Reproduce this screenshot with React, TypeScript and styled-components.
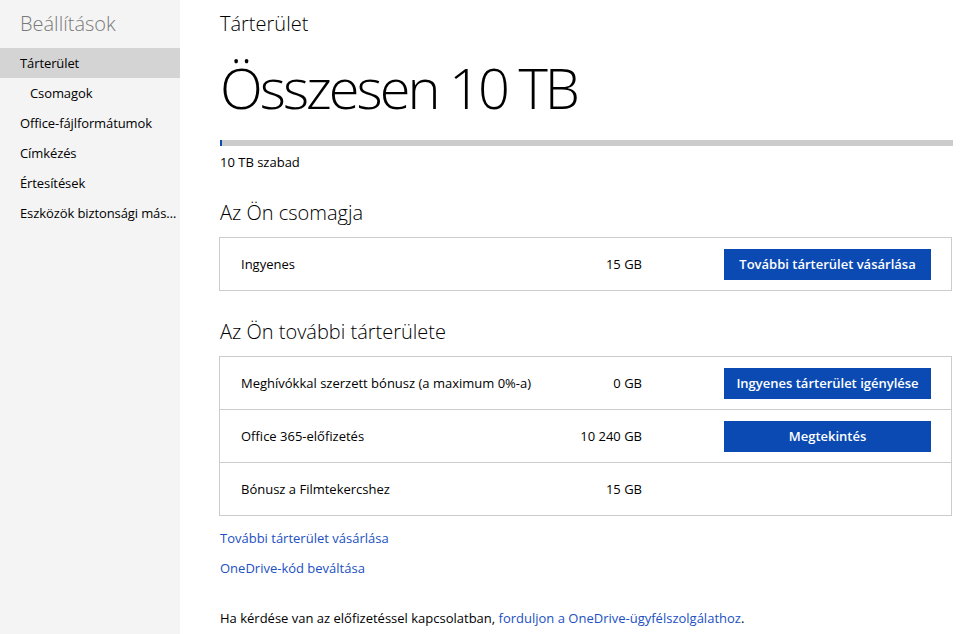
import React from 'react';
import styled, { createGlobalStyle } from 'styled-components';

const GlobalStyle = createGlobalStyle`
  html, body {
    margin: 0;
    padding: 0;
    background: #ffffff;
  }
  body {
    font-family: 'Open Sans', 'Noto Sans', sans-serif;
    font-size: 13px;
    color: #000000;
  }
`;

const navItems = [
  { label: 'Tárterület', active: true, sub: false },
  { label: 'Csomagok', active: false, sub: true },
  { label: 'Office-fájlformátumok', active: false, sub: false },
  { label: 'Címkézés', active: false, sub: false },
  { label: 'Értesítések', active: false, sub: false },
  { label: 'Eszközök biztonsági másolata', active: false, sub: false },
];

const planRows = [
  { label: 'Ingyenes', value: '15 GB', action: 'További tárterület vásárlása' },
];

const extraRows = [
  {
    label: 'Meghívókkal szerzett bónusz (a maximum 0%-a)',
    value: '0 GB',
    action: 'Ingyenes tárterület igénylése',
  },
  { label: 'Office 365-előfizetés', value: '10 240 GB', action: 'Megtekintés' },
  { label: 'Bónusz a Filmtekercshez', value: '15 GB', action: '' },
];

function StorageTable({ rows }: { rows: typeof extraRows }) {
  return (
    <Table>
      {rows.map((row) => (
        <Row key={row.label}>
          <RowLabel>{row.label}</RowLabel>
          <RowValue>{row.value}</RowValue>
          {row.action ? <ActionButton>{row.action}</ActionButton> : <span />}
        </Row>
      ))}
    </Table>
  );
}

function App() {
  return (
    <>
      <GlobalStyle />
      <Page>
        <Sidebar>
          <SidebarTitle>Beállítások</SidebarTitle>
          <Nav>
            {navItems.map((item) => (
              <NavItem key={item.label} $active={item.active} $sub={item.sub}>
                {item.label}
              </NavItem>
            ))}
          </Nav>
        </Sidebar>
        <Main>
          <PageTitle>Tárterület</PageTitle>
          <Total>Összesen 10 TB</Total>
          <UsageBar>
            <UsageFill style={{ width: '0.15%' }} />
          </UsageBar>
          <FreeText>10 TB szabad</FreeText>

          <SectionTitle>Az Ön csomagja</SectionTitle>
          <StorageTable rows={planRows} />

          <SectionTitle>Az Ön további tárterülete</SectionTitle>
          <StorageTable rows={extraRows} />

          <Links>
            <Link href="#">További tárterület vásárlása</Link>
            <Link href="#">OneDrive-kód beváltása</Link>
          </Links>
          <Footer>
            Ha kérdése van az előfizetéssel kapcsolatban,{' '}
            <Link href="#">forduljon a OneDrive-ügyfélszolgálathoz</Link>.
          </Footer>
        </Main>
      </Page>
    </>
  );
}

const Page = styled.div`
  display: flex;
  min-height: 100vh;
`;

const Sidebar = styled.nav`
  flex: 0 0 180px;
  width: 180px;
  background-color: #f4f4f4;
  padding-top: 10px;
`;

const SidebarTitle = styled.div`
  font-size: 20px;
  font-weight: 300;
  line-height: 28px;
  color: #7a7a7a;
  padding-left: 20px;
  margin-bottom: 10px;
`;

const Nav = styled.div`
  display: flex;
  flex-direction: column;
`;

const NavItem = styled.div<{ $active: boolean; $sub: boolean }>`
  height: 30px;
  line-height: 30px;
  padding-left: ${(p) => (p.$sub ? '30px' : '20px')};
  background-color: ${(p) => (p.$active ? '#d4d4d4' : 'transparent')};
  letter-spacing: -0.1px;
  white-space: nowrap;
  overflow: hidden;
  text-overflow: ellipsis;
  cursor: pointer;
`;

const Main = styled.main`
  flex: 1;
  min-width: 0;
  padding: 10px 22px 0 40px;
`;

const PageTitle = styled.h1`
  margin: 0;
  font-size: 20px;
  font-weight: 300;
  line-height: 28px;
`;

const Total = styled.div`
  font-size: 56px;
  font-weight: 300;
  letter-spacing: -3px;
  line-height: 80px;
  margin: 9px 0 0 0;
`;

const UsageBar = styled.div`
  height: 6px;
  background-color: #cccccc;
  margin-top: 13px;
`;

const UsageFill = styled.div`
  height: 100%;
  min-width: 2px;
  background-color: #0a4ab2;
`;

const FreeText = styled.div`
  line-height: 20px;
  margin-top: 6px;
`;

const SectionTitle = styled.h2`
  margin: 0;
  font-size: 20px;
  font-weight: 300;
  line-height: 28px;
  margin-top: 27px;
  margin-bottom: 10px;
`;

const Table = styled.div`
  border: 1px solid #cccccc;
  margin-left: -1px;
  margin-right: 1px;
`;

const Row = styled.div`
  display: grid;
  grid-template-columns: minmax(0, 1fr) 182px 207px;
  align-items: center;
  height: 52px;
  padding: 0 20px 0 21px;
  & + & {
    border-top: 1px solid #cccccc;
  }
`;

const RowLabel = styled.span`
  white-space: nowrap;
`;

const RowValue = styled.span`
  text-align: right;
  padding-right: 82px;
`;

const ActionButton = styled.button`
  height: 31px;
  border: none;
  padding: 0 6px;
  background-color: #0a4ab2;
  color: #ffffff;
  font-family: inherit;
  font-size: 13px;
  font-weight: 600;
  white-space: nowrap;
  cursor: pointer;
`;

const Links = styled.div`
  display: flex;
  flex-direction: column;
  align-items: flex-start;
  gap: 10px;
  margin-top: 12px;
`;

const Link = styled.a`
  color: #2150c2;
  text-decoration: none;
  line-height: 20px;
`;

const Footer = styled.p`
  margin: 30px 0 0;
  line-height: 20px;
`;

export default App;
